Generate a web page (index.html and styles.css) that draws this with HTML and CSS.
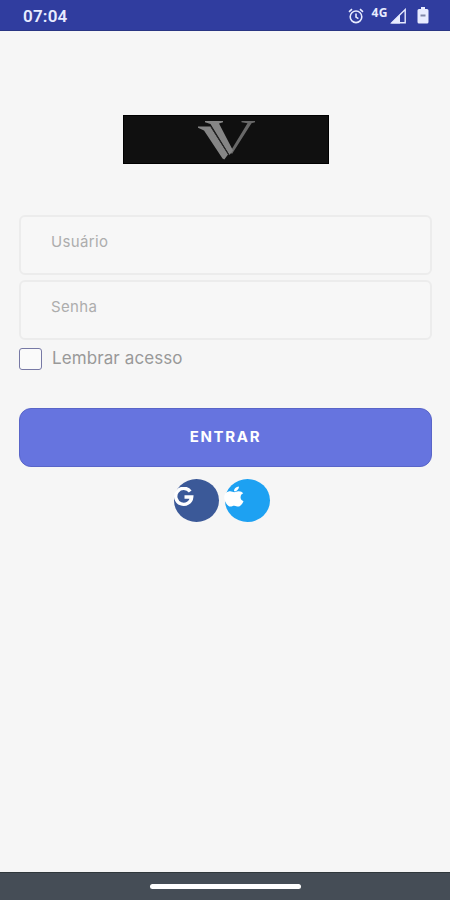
FILE: index.html
```html
<!DOCTYPE html>
<html lang="pt-BR">
<head>
    <meta charset="UTF-8">
    <meta name="viewport" content="width=device-width, initial-scale=1.0">
    <title>Login</title>
    <link rel="stylesheet" href="styles.css">
</head>
<body>
    <header class="status-bar">
        <span class="clock">07:04</span>
        <div class="status-icons">
            <svg class="alarm" width="16" height="16" viewBox="0 0 16 16">
                <circle cx="8" cy="8.8" r="5.8"/>
                <path d="M8 5.500v3.600l2.400 1.500M1 3.800l3-2.600M15 3.800l-3-2.600"/>
            </svg>
            <span class="network">4G</span>
            <svg class="signal" width="17" height="16" viewBox="0 0 17 16">
                <path class="outline" d="M1.800 14.800L15.200 1.600v13.200z"/>
                <path class="level" d="M1 15.500l9-9v9z"/>
            </svg>
            <svg class="battery" width="12" height="17" viewBox="0 0 12 17">
                <path d="M4 0h4v2h2q1.500 0 1.500 1.500v11.500q0 1.500-1.500 1.500h-8q-1.500 0-1.500-1.500v-11.500q0-1.500 1.500-1.500h2z"/>
                <rect x="3.500" y="7.500" width="5" height="2"/>
            </svg>
        </div>
    </header>
    <main class="login-page">
        <div class="logo">
            <svg width="58" height="41" viewBox="0 0 58 41">
                <path class="thin" d="M43.500 1H57v1.200l-3.500 1L34 34l-2-2L49.500 3.200l-6-1z"/>
                <path class="stem" d="M0 6.500h12.500L30 34.500 26.300 39.500 24.500 38.500 6 10.500 0 7.800z"/>
                <path class="stem" d="M7 1h18v1.200l-4 1.300L35 30.500l-3.500 4.500L12.500 4 7 2.300z"/>
                <path class="gap" d="M13 7l18 28"/>
            </svg>
        </div>
        <form class="login-form">
            <input class="field" type="text" name="usuario" placeholder="Usuário" aria-label="Usuário">
            <input class="field" type="password" name="senha" placeholder="Senha" aria-label="Senha">
            <label class="remember">
                <input type="checkbox" name="lembrar">
                <span>Lembrar acesso</span>
            </label>
            <button type="submit">ENTRAR</button>
        </form>
        <div class="social">
            <a class="google" href="#" aria-label="Google">
                <svg width="20" height="20" viewBox="0 0 20 20">
                    <path d="M16.200 4.600A8 8 0 1 0 17.700 10H10.500"/>
                </svg>
            </a>
            <a class="apple" href="#" aria-label="Apple">
                <svg width="20" height="23" viewBox="0 0 384 512" preserveAspectRatio="none">
                    <path d="M319 269c0-37 16-64 50-84-19-27-47-42-85-45-35-3-74 21-88 21-15 0-50-20-77-20C63 142 4 186 4 274c0 26 5 53 14 81 13 36 58 125 106 124 25-1 42-18 74-18s47 18 75 18c48-1 89-82 101-118-65-30-55-90-55-92zM262 105c27-32 25-62 24-73-24 1-52 16-68 35-17 20-28 44-25 72 26 2 50-11 69-34z"/>
                </svg>
            </a>
        </div>
    </main>
    <footer class="nav-bar">
        <div class="handle"></div>
    </footer>
</body>
</html>
```
FILE: styles.css
```css
* {
    box-sizing: border-box;
}
body {
    margin: 0;
    height: 100vh;
    display: flex;
    flex-direction: column;
    background-color: #f6f6f6;
    font-family: "Open Sans", sans-serif;
}
.status-bar {
    height: 31px;
    padding: 1px 21px 0 23px;
    display: flex;
    justify-content: space-between;
    align-items: center;
    background-color: #303d9f;
    border-bottom: 1px solid #293583;
    color: #e8ecff;
}
.clock {
    font-family: Roboto, sans-serif;
    font-size: 17px;
    font-weight: 600;
    letter-spacing: 0.2px;
}
.status-icons {
    display: flex;
    align-items: center;
}
.alarm {
    fill: none;
    stroke: #e8ecff;
    stroke-width: 1.6;
}
.network {
    margin: 0 2px 6px 7px;
    font-size: 12px;
    font-weight: 700;
    line-height: 12px;
    letter-spacing: 0.5px;
}
.signal .outline {
    fill: none;
    stroke: #e8ecff;
    stroke-width: 1.4;
}
.signal .level, .battery path {
    fill: #e8ecff;
}
.battery {
    margin-left: 10px;
}
.battery rect {
    fill: #8087a8;
}
.login-page {
    flex: 1;
    padding: 84px 18px 0 19px;
}
.logo {
    width: 206px;
    height: 49px;
    margin: 0 auto 51px;
    padding: 4px 0 0 74px;
    background-color: #101010;
    border: 1px solid #000000;
}
.logo svg {
    display: block;
}
.logo .stem {
    fill: #858585;
}
.logo .gap {
    stroke: #282828;
    stroke-width: 1;
}
.logo .thin {
    fill: #686868;
}
.login-form {
    display: flex;
    flex-direction: column;
}
.field {
    width: 100%;
    height: 60px;
    margin-bottom: 5px;
    padding: 0 30px 7px;
    background-color: #f7f7f7;
    border: 2px solid #ececec;
    border-radius: 6px;
    font-family: Inter, sans-serif;
    font-size: 15px;
    letter-spacing: 0.35px;
    color: #444444;
}
.field::placeholder {
    color: #adadad;
    opacity: 1;
}
.remember {
    display: flex;
    align-items: center;
    height: 22px;
    margin: 3px 0 38px;
    font-family: Inter, sans-serif;
    font-size: 17px;
    color: #999999;
}
.remember input {
    appearance: none;
    width: 23px;
    height: 22px;
    margin: 0 10px 0 0;
    background-color: #fafafa;
    border: 1px solid #7779a5;
    border-radius: 3px;
}
.remember span {
    letter-spacing: 0.1px;
    margin-top: -2px;
}
.login-form button {
    height: 59px;
    padding: 0 0 2px;
    background-color: #6674df;
    border: 1px solid #5965c8;
    border-radius: 12px;
    color: #ffffff;
    font-family: Inter, sans-serif;
    font-size: 15px;
    font-weight: 700;
    letter-spacing: 1.7px;
    cursor: pointer;
}
.social {
    display: flex;
    gap: 6px;
    margin: 12px 0 0 155px;
}
.social a {
    width: 45px;
    height: 43px;
    padding-top: 8px;
    border-radius: 50%;
}
.social svg {
    display: block;
}
.google {
    background-color: #3b5998;
}
.google svg {
    fill: none;
    stroke: #ffffff;
    stroke-width: 3.4;
}
.social .apple {
    padding-top: 6px;
    background-color: #1da1f2;
}
.apple svg {
    margin-left: -1px;
    fill: #ffffff;
}
.nav-bar {
    height: 28px;
    display: flex;
    justify-content: center;
    align-items: center;
    background-color: #454d56;
    border-top: 1px solid #30383c;
}
.handle {
    width: 151px;
    height: 5px;
    border-radius: 3px;
    background-color: #ffffff;
}
```
